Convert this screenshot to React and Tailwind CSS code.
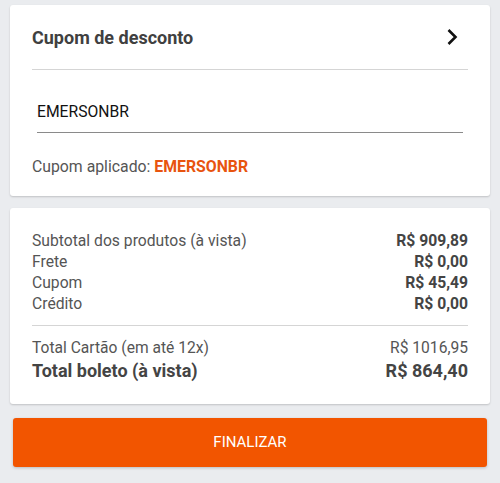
const rows = [
  ["Subtotal dos produtos (à vista)", "R$ 909,89"],
  ["Frete", "R$ 0,00"],
  ["Cupom", "R$ 45,49"],
  ["Crédito", "R$ 0,00"],
];

const App = () => (
  <div className="min-h-screen bg-[#eaecef] px-[10px] pt-[5px] font-['Roboto',sans-serif]">
    <div className="rounded-[3px] bg-white px-[22px] shadow-[0_1px_2px_rgba(0,0,0,0.18)]">
      <div className="flex h-[65px] items-center justify-between border-b border-[#d5d5d5]">
        <span className="text-[18px] font-bold text-[#404040]">Cupom de desconto</span>
        <svg width="12" height="18" viewBox="0 0 12 18" className="mr-[10px]">
          <path d="M2.5 2 L9.5 9 L2.5 16" fill="none" stroke="#111" strokeWidth="2.6" />
        </svg>
      </div>
      <div className="px-[5px] pt-[32px]">
        <div className="border-b-[1.5px] border-[#8a8a8a] pb-[10px] text-[15.7px] leading-[20px] text-[#111]">
          EMERSONBR
        </div>
      </div>
      <div className="pb-[19px] pt-[24px] text-[15.8px] leading-[20px] text-[#555]">
        Cupom aplicado: <span className="font-bold text-[#e8540f]">EMERSONBR</span>
      </div>
    </div>

    <div className="mt-[12px] rounded-[3px] bg-white px-[22px] pb-[21px] pt-[22px] shadow-[0_1px_2px_rgba(0,0,0,0.18)]">
      <div className="border-b border-[#d5d5d5] pb-[11px]">
        {rows.map(([label, value]) => (
          <div key={label} className="flex justify-between text-[15.7px] leading-[21px] text-[#555]">
            <span>{label}</span>
            <span className="font-bold text-[#444]">{value}</span>
          </div>
        ))}
      </div>
      <div className="flex justify-between pt-[12px] text-[15.6px] leading-[21px] text-[#555]">
        <span>Total Cartão (em até 12x)</span>
        <span>R$ 1016,95</span>
      </div>
      <div className="flex justify-between text-[18px] font-bold leading-[24px] text-[#444]">
        <span>Total boleto (à vista)</span>
        <span>R$ 864,40</span>
      </div>
    </div>

    <button className="mx-[3px] mt-[14px] flex h-[49px] w-[474px] items-center justify-center rounded-[3px] bg-[#f25500] text-[15px] text-white shadow-[0_1px_3px_rgba(0,0,0,0.2)]">
      FINALIZAR
    </button>
  </div>
);

export default App;
